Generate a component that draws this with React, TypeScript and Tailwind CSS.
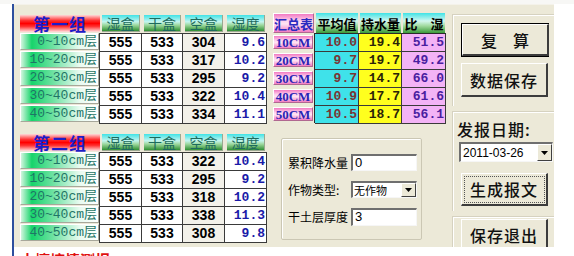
import React from 'react';

const cjk = "font-['Noto_Sans_CJK_SC',sans-serif]";
const mono = "font-['Liberation_Mono','Noto_Sans_CJK_SC',monospace]";

const group1 = [
  ['0~10cm层', '555', '533', '304', '9.6'],
  ['10~20cm层', '555', '533', '317', '10.2'],
  ['20~30cm层', '555', '533', '295', '9.2'],
  ['30~40cm层', '555', '533', '322', '10.4'],
  ['40~50cm层', '555', '533', '334', '11.1'],
];

const group2 = [
  ['0~10cm层', '555', '533', '322', '10.4'],
  ['10~20cm层', '555', '533', '295', '9.2'],
  ['20~30cm层', '555', '533', '318', '10.2'],
  ['30~40cm层', '555', '533', '338', '11.3'],
  ['40~50cm层', '555', '533', '308', '9.8'],
];

const summary = [
  ['10CM', '10.0', '19.4', '51.5'],
  ['20CM', '9.7', '19.7', '49.2'],
  ['30CM', '9.7', '14.7', '66.0'],
  ['40CM', '10.9', '17.7', '61.6'],
  ['50CM', '10.5', '18.7', '56.1'],
];

const headTile =
  'h-[17px] mx-[2px] flex items-center justify-center text-[14px] leading-none text-[#1d6b5e] bg-[linear-gradient(to_bottom,#3fe3e6_0%,#c4f5ef_42%,#9bd79b_64%,#2f8f33_100%)] border-b border-r border-[#9aa890]';

const cell = 'h-[18px] border-r border-b border-[#3a3a3a] flex items-center';

const Group = ({ title, rows }: { title: string; rows: string[][] }) => (
  <div className="w-[247px]">
    <div className="grid grid-cols-[80px_42px_41px_42px_42px] h-[18px]">
      <div className="h-[17px] flex items-center justify-center bg-[linear-gradient(to_bottom,#ffd8d8_0%,#ff3434_32%,#ff0000_50%,#ff3434_68%,#ffe0e0_100%)]">
        <span className={`${cjk} text-[17px] font-bold leading-[17px] text-[#1c1cc8] tracking-[1px]`}>{title}</span>
      </div>
      {['湿盒', '干盒', '空盒', '湿度'].map((h) => (
        <div key={h} className={`${headTile} ${cjk}`}>{h}</div>
      ))}
    </div>
    <div className="flex">
      <div className="w-[80px] flex flex-col">
        {rows.map((r) => (
          <div
            key={r[0]}
            className={`h-[17px] mb-[1px] flex items-center justify-end pr-[1px] border-t border-l border-white border-b border-r border-b-[#a7a79a] border-r-[#a7a79a] bg-[linear-gradient(to_right,#d2f6df_0%,#17d46b_14%,#6fe2a3_42%,#e8fbf0_76%,#ffffff_100%)] ${mono} text-[13px] leading-none text-[#1f7566]`}
          >
            {r[0]}
          </div>
        ))}
      </div>
      <div className="grid grid-cols-[42px_41px_42px_42px] border-t border-l border-[#3a3a3a] h-[91px]">
        {rows.map((r) => (
          <React.Fragment key={r[0]}>
            <div className={`${cell} justify-center bg-white font-['Liberation_Sans',sans-serif] font-bold text-[14px] text-black`}>{r[1]}</div>
            <div className={`${cell} justify-center bg-white font-['Liberation_Sans',sans-serif] font-bold text-[14px] text-black`}>{r[2]}</div>
            <div className={`${cell} justify-center bg-[#f3f1ea] font-['Liberation_Sans',sans-serif] font-bold text-[14px] text-black`}>{r[3]}</div>
            <div className={`${cell} justify-end pr-[1px] bg-white ${mono} font-bold text-[13px] text-[#1a1aa8]`}>{r[4]}</div>
          </React.Fragment>
        ))}
      </div>
    </div>
  </div>
);

const pinkTile =
  'flex items-center justify-center bg-[linear-gradient(to_bottom,#f27ac2_0%,#ffd2ee_38%,#ffe4f4_55%,#f27ac2_100%)] border-t border-l border-white border-b border-r border-b-[#b06890] border-r-[#b06890]';

const Summary = () => (
  <div className="w-[173px]">
    <div className="grid grid-cols-[42px_44px_43px_44px] h-[20px]">
      <div className={`${pinkTile} mr-[1px] ${cjk} text-[13px] font-bold leading-none text-[#2a2ac0]`}>汇总表</div>
      {['平均值', '持水量', '比　湿'].map((h) => (
        <div
          key={h}
          className={`mx-[1px] flex items-center justify-center bg-[linear-gradient(to_bottom,#3fe3e6_0%,#d4f7ef_40%,#a2dba0_64%,#3a9a3a_100%)] ${cjk} text-[13px] font-bold leading-none text-black`}
        >
          {h}
        </div>
      ))}
    </div>
    <div className="flex">
      <div className="w-[42px] flex flex-col">
        {summary.map((r) => (
          <div key={r[0]} className="h-[18px] py-[2px] pr-[1px]">
            <div className={`${pinkTile} h-full font-['Liberation_Serif',serif] font-bold text-[13px] leading-none text-[#2a24b4]`}>{r[0]}</div>
          </div>
        ))}
      </div>
      <div className="grid grid-cols-[44px_43px_44px] border-t border-l border-[#2a2a2a] h-[90px]">
        {summary.map((r) => (
          <React.Fragment key={r[0]}>
            <div className={`${cell} justify-end pr-[1px] bg-[#3fe2ea] ${mono} font-bold text-[13px] text-[#7a3434]`}>{r[1]}</div>
            <div className={`${cell} justify-end pr-[1px] bg-[#ffff1e] ${mono} font-bold text-[13px] text-[#2a2408]`}>{r[2]}</div>
            <div className={`${cell} justify-end pr-[1px] bg-[#f3b3f6] ${mono} font-bold text-[13px] text-[#4a1ea0]`}>{r[3]}</div>
          </React.Fragment>
        ))}
      </div>
    </div>
  </div>
);

const sunken =
  'bg-white border-t-2 border-l-2 border-b border-r border-t-[#6f6f6f] border-l-[#6f6f6f] border-b-[#f6f6f6] border-r-[#f6f6f6]';

const ArrowBtn = () => (
  <div className="w-[15px] h-full flex items-center justify-center bg-[#ece9d8] border-t border-l border-white border-b border-r border-b-[#404040] border-r-[#404040]">
    <svg width="7" height="4" viewBox="0 0 7 4">
      <path d="M0 0h7L3.5 4z" fill="#000" />
    </svg>
  </div>
);

const Params = () => (
  <div className="ml-[8px] mt-[15px] w-[141px] h-[102px] border border-[#cbc7b4] rounded-[2px] shadow-[inset_1px_1px_0_#ffffff] pt-[15px] pl-[6px] flex flex-col gap-[10px]">
    <div className="flex items-center h-[17px]">
      <span className={`w-[63px] ${cjk} text-[12px] leading-none text-black`}>累积降水量</span>
      <div className={`w-[66px] h-[17px] ${sunken} flex items-center pl-[2px] font-['Liberation_Sans',sans-serif] text-[13px] text-black`}>0</div>
    </div>
    <div className="flex items-center h-[17px]">
      <span className={`w-[63px] ${cjk} text-[12px] leading-none text-black`}>作物类型:</span>
      <div className={`w-[66px] h-[17px] ${sunken} flex items-center justify-between`}>
        <span className={`${cjk} text-[11px] leading-none text-black pl-[1px]`}>无作物</span>
        <ArrowBtn />
      </div>
    </div>
    <div className="flex items-center h-[17px]">
      <span className={`w-[63px] ${cjk} text-[12px] leading-none text-black`}>干土层厚度</span>
      <div className={`w-[66px] h-[18px] ${sunken} flex items-center pl-[2px] font-['Liberation_Sans',sans-serif] text-[13px] text-black`}>3</div>
    </div>
  </div>
);

const btn =
  'w-[87px] flex items-center justify-center bg-[#ece9d8] border-t border-l border-white border-b-2 border-r-2 border-b-[#3c3c3c] border-r-[#3c3c3c] text-[16px] font-medium leading-none text-[#111]';

const RightCol = () => (
  <div className="ml-[6px] w-[102px] flex flex-col">
    <div className="mt-[9px] h-[92px] border-t border-l border-[#d6d2c0] shadow-[inset_1px_1px_0_#ffffff] pl-[8px] pt-[8px] flex flex-col gap-[6px]">
      <div className="w-[88px] h-[34px] border border-black">
        <div className={`${btn} h-full ${cjk}`}>复　算</div>
      </div>
      <div className={`${btn} h-[34px] ${cjk} tracking-[1px]`}>数据保存</div>
    </div>
    <div className="mt-[5px] h-[100px] border-t border-l border-[#d6d2c0] shadow-[inset_1px_1px_0_#ffffff] pt-[8px] flex flex-col">
      <span className={`ml-[4px] ${cjk} text-[16px] font-medium leading-[19px] text-[#111] tracking-[1px]`}>发报日期:</span>
      <div className={`ml-[6px] mt-[3px] w-[94px] h-[20px] ${sunken} flex items-center justify-between`}>
        <span className="pl-[2px] font-['Liberation_Sans',sans-serif] text-[12px] leading-none text-black">2011-03-26</span>
        <ArrowBtn />
      </div>
      <div className={`ml-[8px] mt-[11px] h-[33px] ${btn} ${cjk} tracking-[1px]`}>
        <div className="w-[81px] h-[27px] border border-dotted border-[#555] flex items-center justify-center">生成报文</div>
      </div>
    </div>
    <div className="mt-[5px] h-[40px] border-t border-l border-[#d6d2c0] shadow-[inset_1px_1px_0_#ffffff] pl-[8px] pt-[2px]">
      <div className={`${btn} h-[33px] ${cjk} tracking-[1px]`}>保存退出</div>
    </div>
  </div>
);

export default function App() {
  return (
    <div className="w-[574px] h-[256px] bg-white overflow-hidden">
      <div className="h-[4px] w-full bg-[#f7f7f5]" />
      <div className="ml-[12px] h-[252px] w-[542px] border-l-2 border-[#2d4f9e] flex flex-col">
        <div className="h-[243px] w-[540px] bg-[#ece9d8] overflow-hidden flex items-start border-t border-[#f4f2ea]">
          <div className="ml-[6px] mt-[10px] flex flex-col gap-[10px]">
            <Group title="第一组" rows={group1} />
            <Group title="第二组" rows={group2} />
          </div>
          <div className="ml-[6px] mt-[8px] flex flex-col">
            <Summary />
            <Params />
          </div>
          <RightCol />
        </div>
        <div className="h-[9px] overflow-hidden pl-[6px] bg-white">
          <span className={`${cjk} text-[15px] font-bold leading-[22px] text-[#e01010] block mt-[2px]`}>土壤墒情测报</span>
        </div>
      </div>
    </div>
  );
}
